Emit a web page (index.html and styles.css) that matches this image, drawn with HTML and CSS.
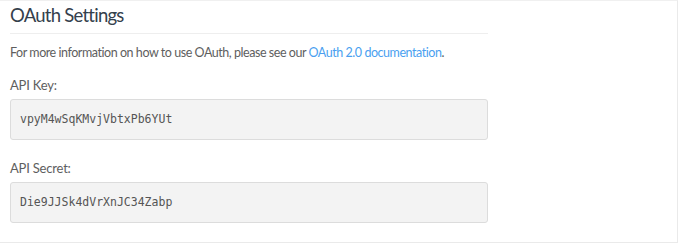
FILE: index.html
```html
<!DOCTYPE html>
<html>
<head>
<meta charset="utf-8">
<link rel="stylesheet" href="styles.css">
</head>
<body>
<div class="panel">
  <div class="content">
    <h2 class="title">OAuth Settings</h2>
    <p class="intro">For more information on how to use OAuth, please see our <a href="#" class="link">OAuth 2.0 documentation</a>.</p>
    <div class="field">
      <label class="label">API Key:</label>
      <div class="code-box">vpyM4wSqKMvjVbtxPb6YUt</div>
    </div>
    <div class="field">
      <label class="label">API Secret:</label>
      <div class="code-box">Die9JJSk4dVrXnJC34Zabp</div>
    </div>
  </div>
</div>
</body>
</html>
```
FILE: styles.css
```css
html, body {
  margin: 0;
  padding: 0;
  background: #fff;
}
body {
  font-family: "Lato", "Noto Sans", sans-serif;
  color: #555;
}
.panel {
  width: 677px;
  height: 241px;
  border-top: 1px solid #f0f0f0;
  border-right: 1px solid #eaeaea;
  border-bottom: 1px solid #eaeaea;
  box-sizing: content-box;
}
.content {
  width: 478px;
  padding: 0 0 0 10px;
}
.title {
  margin: 0;
  padding: 3px 0 7px;
  font-size: 18.5px;
  font-weight: 400;
  letter-spacing: -0.75px;
  line-height: 22px;
  color: #34404c;
  border-bottom: 1px solid #eeeeee;
}
.intro {
  margin: 9px 0 0;
  font-size: 12.5px;
  letter-spacing: -0.45px;
  line-height: 20px;
  color: #5e5e5e;
  white-space: nowrap;
}
.link {
  color: #4a9ff0;
  text-decoration: none;
}
.field {
  margin-top: 13px;
}
.field + .field {
  margin-top: 19px;
}
.label {
  display: block;
  font-size: 13px;
  letter-spacing: -0.2px;
  line-height: 18px;
  color: #5e5e5e;
  margin-bottom: 5px;
}
.code-box {
  box-sizing: border-box;
  height: 41px;
  padding: 0 9px;
  background: #f3f3f3;
  border: 1px solid #dcdcdc;
  border-radius: 3px;
  font-family: "DejaVu Sans Mono", monospace;
  font-size: 11.5px;
  line-height: 39px;
  color: #555;
}
```
